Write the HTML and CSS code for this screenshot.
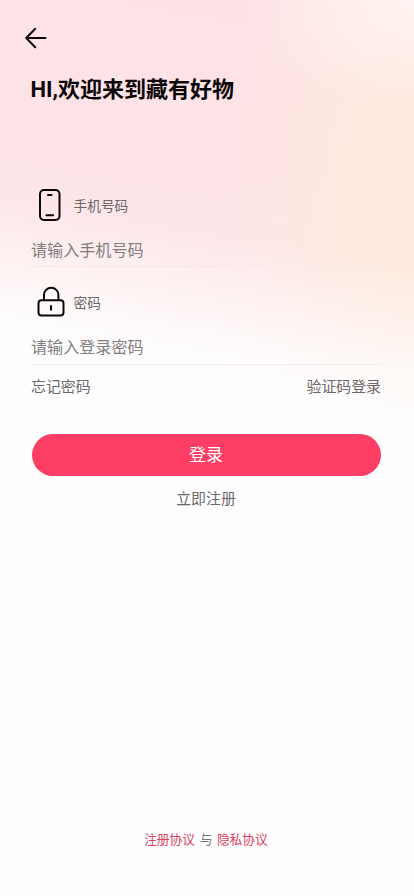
FILE: index.html
```html
<!DOCTYPE html>
<html lang="zh-CN">
<head>
<meta charset="utf-8">
<meta name="viewport" content="width=device-width, initial-scale=1">
<title>登录</title>
<link rel="stylesheet" href="styles.css">
</head>
<body>
<main class="page">
  <a class="back" href="#" aria-label="返回">
    <svg width="24" height="22" viewBox="0 0 24 22"><path d="M11.2 1.8 2.2 11l9 9.2M2.2 11h19.3"/></svg>
  </a>
  <h1 class="title">HI,欢迎来到藏有好物</h1>
  <form class="form">
    <div class="field">
      <label class="label" for="phone">
        <svg class="icon" width="36" height="36" viewBox="0 0 36 36"><rect x="9" y="3" width="19.5" height="30" rx="4"/><path d="M17 7.9h3.6M15.4 28.2h6.8"/></svg>
        手机号码
      </label>
      <input class="input" id="phone" type="tel" placeholder="请输入手机号码">
    </div>
    <div class="field">
      <label class="label" for="password">
        <svg class="icon" width="36" height="36" viewBox="0 0 36 36"><rect x="7.5" y="16.3" width="25" height="15.2" rx="3"/><path d="M13 16v-5a7.2 7.2 0 0 1 14.4 0v5M20 22v3.8"/></svg>
        密码
      </label>
      <input class="input" id="password" type="password" placeholder="请输入登录密码">
    </div>
    <div class="links"><a href="#">忘记密码</a><a href="#">验证码登录</a></div>
    <button class="submit" type="button">登录</button>
    <a class="register" href="#">立即注册</a>
  </form>
  <footer class="terms"><a href="#">注册协议</a><span>与</span><a href="#">隐私协议</a></footer>
</main>
</body>
</html>
```

FILE: styles.css
```css
* { box-sizing: border-box; }

body {
  margin: 0;
  background: #fefefe;
  color: #6b6869;
  font-family: Roboto, "Noto Sans CJK SC", sans-serif;
}

a { color: inherit; text-decoration: none; }

svg {
  display: block;
  fill: none;
  stroke: #0c090a;
  stroke-width: 2;
  stroke-linecap: round;
  stroke-linejoin: round;
}

.page {
  display: flex;
  flex-direction: column;
  height: 896px;
  padding: 27px 33px 0 31px;
  background:
    radial-gradient(ellipse 170px 110px at 100% 0, #fff4f2 0%, #fff4f200 100%),
    linear-gradient(190deg, #fefefe00 260px, #fefefe60 320px, #fefefec0 370px, #fefefe 440px),
    radial-gradient(ellipse 230px 360px at 108% 200px, #feeadd 0%, #feeaddc0 45%, #feeadd00 100%),
    linear-gradient(190deg, #fee2e7 0, #fee3e7 190px, #fde6e9 290px, #feebec 350px, #fefafa 430px);
}

.back { width: 24px; margin-left: -7px; }

.title {
  margin: 25px 0 0 -0.5px;
  color: #0b0708;
  font-size: 22px;
  font-weight: 700;
  line-height: 32px;
  white-space: nowrap;
}

.form { display: flex; flex-direction: column; margin-top: 81px; }

.field {
  height: 98px;
  padding-top: 17px;
  border-bottom: 1px solid #f3eeee;
}

.field:first-child {
  height: 80px;
  padding-top: 0;
  border-color: #f6e7e8;
}

.label {
  display: flex;
  align-items: center;
  gap: 6.5px;
  height: 36px;
  font-size: 13.7px;
}

.input {
  display: block;
  width: 100%;
  height: 30px;
  margin-top: 13px;
  padding: 0;
  border: 0;
  outline: 0;
  background: transparent;
  color: #333;
  font: 16.1px/30px Roboto, "Noto Sans CJK SC", sans-serif;
}

.input::placeholder { color: #827d7e; opacity: 1; }

.links {
  display: flex;
  justify-content: space-between;
  margin-top: 10px;
  font-size: 14.9px;
  line-height: 24px;
}

.submit {
  height: 42px;
  margin: 35px 0.5px 0;
  padding: 0;
  border: 0;
  border-radius: 21px;
  background: #fe3e64;
  color: #fff;
  font: 17px/42px Roboto, "Noto Sans CJK SC", sans-serif;
}

.register {
  align-self: center;
  margin-top: 11px;
  font-size: 14.9px;
  line-height: 24px;
}

.terms {
  display: flex;
  justify-content: center;
  gap: 4.5px;
  margin: auto 0 46px;
  color: #777;
  font-size: 12.75px;
  line-height: 20px;
}

.terms a { color: #dc4163; }
```
